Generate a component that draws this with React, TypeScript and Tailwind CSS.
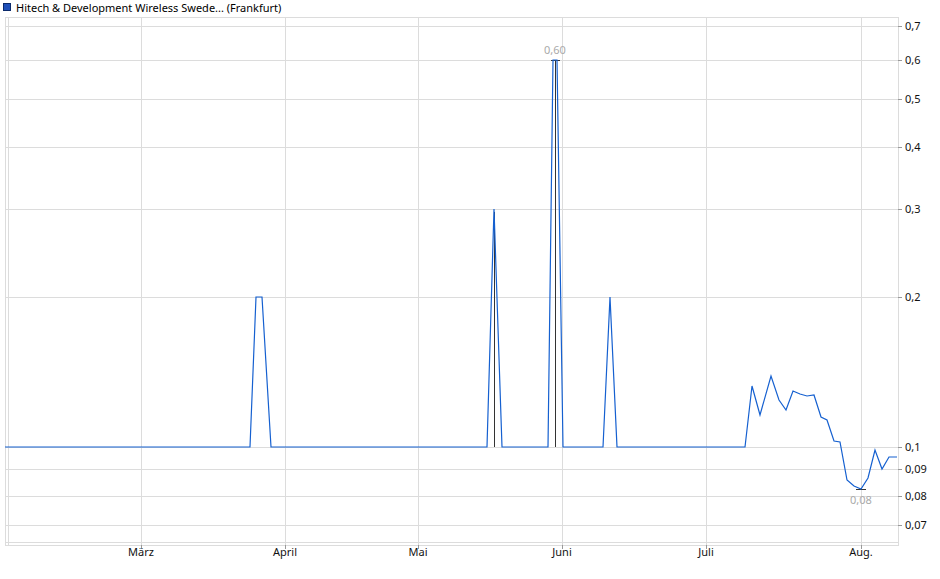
import React from "react";

const yTicks = [
  { v: "0,7", y: 26 },
  { v: "0,6", y: 60 },
  { v: "0,5", y: 99 },
  { v: "0,4", y: 147 },
  { v: "0,3", y: 209 },
  { v: "0,2", y: 297 },
  { v: "0,1", y: 447 },
  { v: "0,09", y: 469 },
  { v: "0,08", y: 496 },
  { v: "0,07", y: 525 },
];

const months = [
  { m: "März", x: 141 },
  { m: "April", x: 285 },
  { m: "Mai", x: 418 },
  { m: "Juni", x: 562 },
  { m: "Juli", x: 706 },
  { m: "Aug.", x: 861 },
];

const pts: [number, number][] = [
  [5, 447], [250, 447], [256, 297], [262, 297], [271, 447],
  [487, 447], [494, 209], [502, 447],
  [548, 447], [553, 60], [557, 60], [563, 447],
  [603, 447], [610, 297], [617, 447],
  [745, 447], [752, 386], [760, 415], [771, 376], [779, 400], [786, 410],
  [793, 391], [800, 394], [807, 396], [814, 395], [821, 417], [827, 420],
  [834, 441], [840, 442], [847, 480], [854, 486], [861, 489], [868, 478],
  [875, 450], [882, 469], [889, 457], [897, 457],
];

export default function App() {
  return (
    <div className="w-[940px] h-[579px] bg-white flex flex-col [font-family:'Liberation_Sans',Arial,sans-serif]">
      <div className="flex items-center gap-[5px] h-[14px] pl-[3px] text-[11px] text-black leading-none">
        <span className="w-[8px] h-[8px] bg-[#1f4fb8] border border-[#0b2a6b]"></span>
        <span>Hitech &amp; Development Wireless Swede... (Frankfurt)</span>
      </div>
      <svg width="940" height="565" viewBox="0 14 940 565" className="block">
        <g stroke="#dcdcdc" strokeWidth="1" shapeRendering="crispEdges">
          {yTicks.map((t) => (
            <line key={t.v} x1="5" x2="898" y1={t.y + 0.5} y2={t.y + 0.5} />
          ))}
          {months.map((m) => (
            <line key={m.m} x1={m.x + 0.5} x2={m.x + 0.5} y1="17" y2="545" />
          ))}
          <rect x="5.5" y="17.5" width="893" height="528" fill="none" />
          <line x1="8.5" x2="8.5" y1="17" y2="545" />
          <line x1="5" x2="898" y1="542.5" y2="542.5" />
        </g>
        <g stroke="#999" shapeRendering="crispEdges">
          {months.map((m) => (
            <line key={m.m} x1={m.x + 0.5} x2={m.x + 0.5} y1="545" y2="549" />
          ))}
          {yTicks.map((t) => (
            <line key={t.v} x1="898" x2="902" y1={t.y + 0.5} y2={t.y + 0.5} />
          ))}
        </g>
        <g stroke="#333" strokeWidth="1">
          <line x1="494.5" x2="494.5" y1="212" y2="447" />
          <line x1="555.5" x2="555.5" y1="60" y2="447" />
          <line x1="551" x2="560" y1="60.5" y2="60.5" />
          <line x1="856" x2="866" y1="489.5" y2="489.5" />
        </g>
        <polyline
          points={pts.map((p) => p.join(",")).join(" ")}
          fill="none"
          stroke="#1560d0"
          strokeWidth="1.2"
        />
        <g fontSize="11" fill="#111">
          {yTicks.map((t) => (
            <text key={t.v} x="905" y={t.y + 4}>{t.v}</text>
          ))}
          {months.map((m) => (
            <text key={m.m} x={m.x} y="556" textAnchor="middle">{m.m}</text>
          ))}
        </g>
        <g fontSize="11" fill="#aaa" textAnchor="middle">
          <text x="555" y="54">0,60</text>
          <text x="861" y="504">0,08</text>
        </g>
      </svg>
    </div>
  );
}
